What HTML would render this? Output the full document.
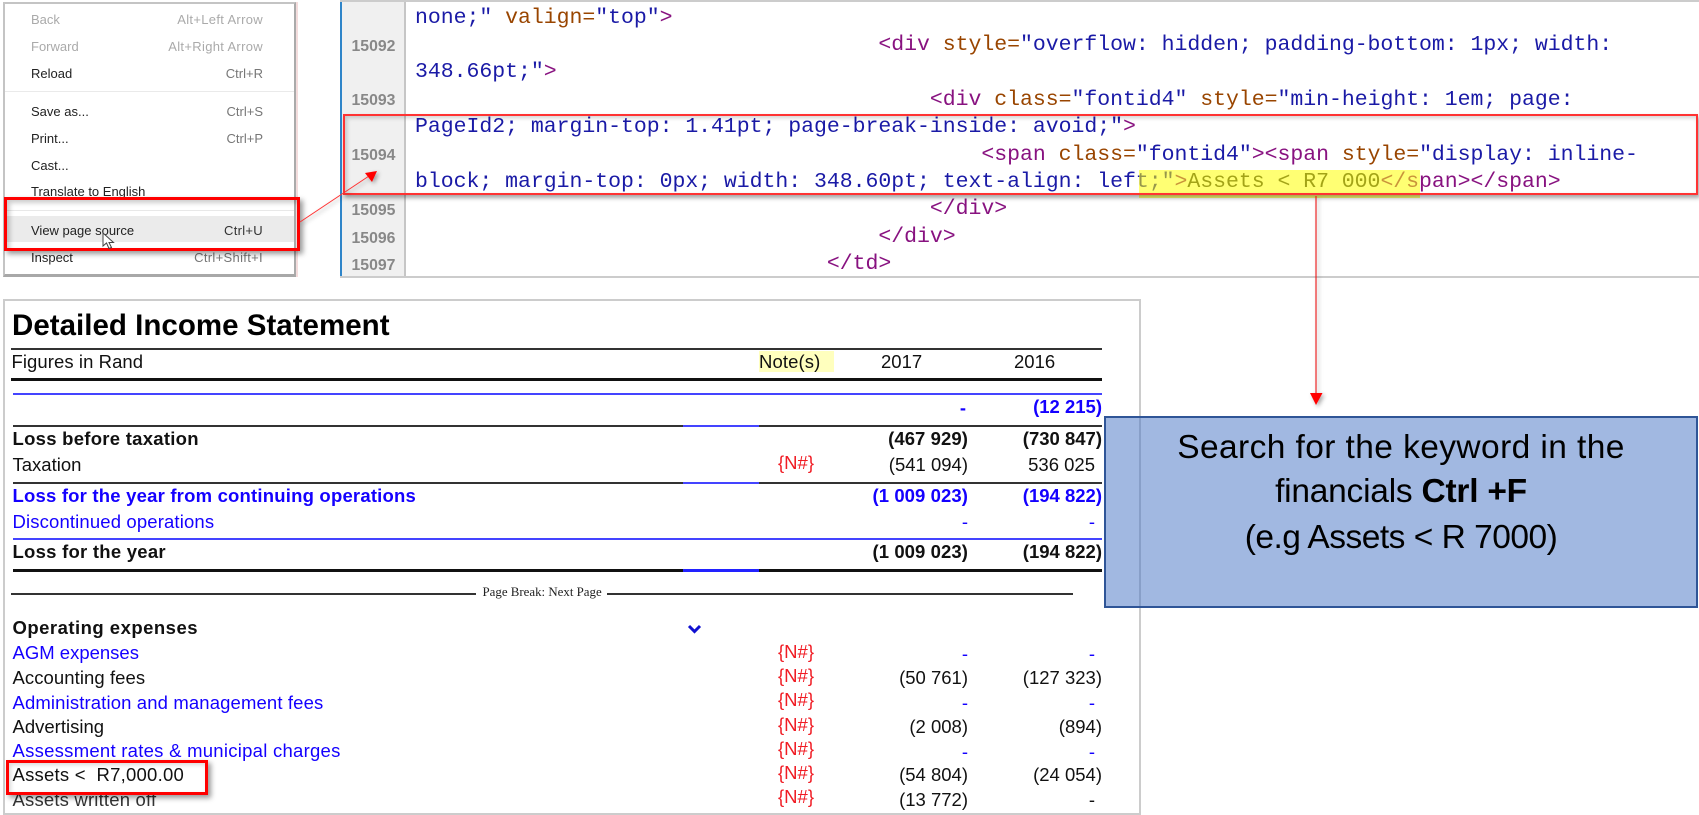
<!DOCTYPE html>
<html><head><meta charset="utf-8"><title>View page source</title>
<style>
html,body{margin:0;padding:0;background:#fff;}
#p{position:relative;width:1699px;height:815px;overflow:hidden;background:#fff;filter:blur(.3px);}
#p div,#p span.a{position:absolute;}
.m{font:13px/20px "Liberation Sans",sans-serif;color:#222;left:31px;white-space:nowrap;}
.k{font:13px/20px "Liberation Sans",sans-serif;color:#777;right:1436px;white-space:nowrap;}
.g{color:#aaa;}
.n{font:bold 15.8px/20px "Liberation Sans",sans-serif;color:#888;left:351.5px;}
pre{position:absolute;left:415px;top:4.5px;margin:0;font:21.5px/27.4px "Liberation Mono",monospace;letter-spacing:-.03px;color:#1a1aa6;white-space:pre;}
.t{color:#881280}.o{color:#994500}
.r{position:absolute;font:18.5px/24px "Liberation Sans",sans-serif;color:#111;white-space:pre;}
.l{left:12.5px}
.b{font-weight:bold}
.u{color:#1400ff}
.c1{right:731px}.c2{right:597px}.c3{right:604px}
.q{left:778px;color:#f01c24;}
.h{position:absolute;}
</style></head><body><div id="p">

<!-- menu -->
<div style="left:3px;top:2px;width:293px;height:275px;background:#fff;border:2px solid #c4c4c4;border-right:2px solid #aaa;border-bottom:3px solid #a8a8a8;box-sizing:border-box"></div>
<div style="left:296px;top:2px;width:2px;height:275px;background:#f3dcdc"></div>
<div style="left:5px;top:91px;width:289px;height:1px;background:#eaeaea"></div>
<div style="left:5px;top:210px;width:289px;height:1px;background:#e8e8e8"></div>
<div style="left:5px;top:216px;width:289px;height:26px;background:#ebebeb"></div>
<div class="m g" style="top:10px">Back</div><div class="k g" style="top:10px;letter-spacing:.32px">Alt+Left Arrow</div>
<div class="m g" style="top:37px">Forward</div><div class="k g" style="top:37px;letter-spacing:.32px">Alt+Right Arrow</div>
<div class="m" style="top:63.5px">Reload</div><div class="k" style="top:63.5px">Ctrl+R</div>
<div class="m" style="top:101.5px">Save as...</div><div class="k" style="top:101.5px">Ctrl+S</div>
<div class="m" style="top:128.5px">Print...</div><div class="k" style="top:128.5px">Ctrl+P</div>
<div class="m" style="top:155.5px">Cast...</div>
<div class="m" style="top:181.5px">Translate to English</div>
<div class="m" style="top:220.5px">View page source</div><div class="k" style="top:220.5px;color:#333;letter-spacing:.3px">Ctrl+U</div>
<div class="m" style="top:247.5px">Inspect</div><div class="k" style="top:247.5px;letter-spacing:.32px">Ctrl+Shift+I</div>
<div style="left:4px;top:197px;width:296px;height:54px;box-sizing:border-box;border:3px solid #f00;box-shadow:3px 3px 5px rgba(0,0,0,.4),inset 3px 3px 5px rgba(0,0,0,.2)"></div>
<svg style="position:absolute;left:102px;top:232px" width="14" height="18" viewBox="0 0 14 18"><path d="M1 1V14L4.5 11L7 16.5L9.5 15.5L7 10.5H11.5Z" fill="#fff" stroke="#444" stroke-width="1"/></svg>

<!-- source panel -->
<div style="left:340px;top:0;width:1359px;height:278px;border-top:2px solid #ccc;border-bottom:2px solid #ccc;box-sizing:border-box;background:#fff"></div>
<div style="left:340px;top:2px;width:2px;height:274px;background:#2f85c9"></div>
<div style="left:342px;top:2px;width:62px;height:274px;background:#f0f0f0;border-right:2px solid #c6c6c6;box-sizing:content-box"></div>
<div class="n" style="top:37px">15092</div>
<div class="n" style="top:91px">15093</div>
<div class="n" style="top:146px">15094</div>
<div class="n" style="top:201px">15095</div>
<div class="n" style="top:229px">15096</div>
<div class="n" style="top:256px">15097</div>
<pre>none;" <span class="o">valign=</span>"top"<span class="t">&gt;</span>
                                    <span class="t">&lt;div</span> <span class="o">style=</span>"overflow: hidden; padding-bottom: 1px; width:
348.66pt;"<span class="t">&gt;</span>
                                        <span class="t">&lt;div</span> <span class="o">class=</span>"fontid4" <span class="o">style=</span>"min-height: 1em; page:
PageId2; margin-top: 1.41pt; page-break-inside: avoid;"<span class="t">&gt;</span>
                                            <span class="t">&lt;span</span> <span class="o">class=</span>"fontid4"<span class="t">&gt;&lt;span</span> <span class="o">style=</span>"display: inline-
block; margin-top: 0px; width: 348.60pt; text-align: left;"<span class="t">&gt;</span><span style="color:#333">Assets &lt; R7 000</span><span class="t">&lt;/span&gt;&lt;/span&gt;</span>
                                        <span class="t">&lt;/div&gt;</span>
                                    <span class="t">&lt;/div&gt;</span>
                                <span class="t">&lt;/td&gt;</span></pre>
<div style="left:1139px;top:170px;width:281px;height:28px;background:rgba(255,255,0,.55)"></div>
<div style="left:343px;top:114px;width:1355px;height:81px;box-sizing:border-box;border:2.5px solid #f33;box-shadow:2px 3px 4px rgba(0,0,0,.35),inset 2px 2px 4px rgba(0,0,0,.18)"></div>

<!-- financial panel -->
<div style="left:3px;top:299px;width:1138px;height:516px;box-sizing:border-box;border:2px solid #ccc;background:#fff"></div>
<div class="r b" style="left:12px;top:309px;font-size:29.5px;line-height:34px;color:#000;letter-spacing:.02px">Detailed Income Statement</div>

<div style="left:11px;top:348px;width:1091px;height:2px;background:#333"></div>
<div style="left:11px;top:378px;width:1091px;height:2.5px;background:#111"></div>
<div style="left:12.5px;top:393px;width:1089.5px;height:2px;background:#4444ff"></div>
<div style="left:12.5px;top:425px;width:1089.5px;height:2px;background:#333"></div>
<div style="left:683px;top:425px;width:76px;height:2px;background:#4444ff"></div>
<div style="left:12.5px;top:481.5px;width:1089.5px;height:2px;background:#333"></div>
<div style="left:683px;top:481.5px;width:76px;height:2px;background:#4444ff"></div>
<div style="left:12.5px;top:538px;width:1089.5px;height:2px;background:#4444ff"></div>
<div style="left:12.5px;top:569px;width:1089.5px;height:2.5px;background:#111"></div>
<div style="left:683px;top:569px;width:76px;height:2.5px;background:#2222ff"></div>
<div style="left:11px;top:593px;width:465px;height:1.5px;background:#333"></div>
<div style="left:607px;top:593px;width:466px;height:1.5px;background:#333"></div>
<div class="r" style="left:482.5px;top:583px;font:12.9px/18px 'Liberation Serif',serif;color:#222">Page Break: Next Page</div>

<div class="h" style="left:759px;top:351px;width:75px;height:21px;background:#ffffbe"></div>
<div class="r l" style="left:11.5px;top:350px;letter-spacing:.07px">Figures in Rand</div>
<div class="r" style="left:759px;top:350px;letter-spacing:.1px">Note(s)</div>
<div class="r" style="left:881px;top:350px">2017</div>
<div class="r" style="left:1014px;top:350px">2016</div>

<div class="r b u c1" style="top:396px;right:733px">-</div>
<div class="r b u c2" style="top:395px">(12 215)</div>

<div class="r l b" style="top:427px;letter-spacing:.27px">Loss before taxation</div>
<div class="r b c1" style="top:427px;letter-spacing:.08px">(467 929)</div>
<div class="r b c2" style="top:427px">(730 847)</div>

<div class="r l" style="top:453px">Taxation</div>
<div class="r q" style="top:451px">{N#}</div>
<div class="r c1" style="top:453px">(541 094)</div>
<div class="r c3" style="top:453px">536 025</div>

<div class="r l b u" style="top:484px;letter-spacing:.2px">Loss for the year from continuing operations</div>
<div class="r b u c1" style="top:484px;letter-spacing:.08px">(1 009 023)</div>
<div class="r b u c2" style="top:484px">(194 822)</div>

<div class="r l u" style="top:509.5px;letter-spacing:.14px">Discontinued operations</div>
<div class="r u c3" style="right:731px;top:510px">-</div>
<div class="r u c3" style="top:510px">-</div>

<div class="r l b" style="top:540px;letter-spacing:.25px">Loss for the year</div>
<div class="r b c1" style="top:540px;letter-spacing:.08px">(1 009 023)</div>
<div class="r b c2" style="top:540px">(194 822)</div>

<div class="r l b" style="top:616px;letter-spacing:.48px">Operating expenses</div>
<svg style="position:absolute;left:687px;top:624px" width="15" height="10" viewBox="0 0 15 10"><path d="M2 2L7.5 7.5L13 2" fill="none" stroke="#1010d0" stroke-width="3"/></svg>

<div class="r l u" style="top:641px">AGM expenses</div>
<div class="r q" style="top:640px">{N#}</div>
<div class="r u c1" style="top:642px">-</div><div class="r u c3" style="top:642px">-</div>

<div class="r l" style="top:666px;letter-spacing:.07px">Accounting fees</div>
<div class="r q" style="top:664px">{N#}</div>
<div class="r c1" style="top:666px">(50 761)</div><div class="r c2" style="top:666px">(127 323)</div>

<div class="r l u" style="top:691px;letter-spacing:.13px">Administration and management fees</div>
<div class="r q" style="top:688px">{N#}</div>
<div class="r u c1" style="top:691px">-</div><div class="r u c3" style="top:691px">-</div>

<div class="r l" style="top:715px">Advertising</div>
<div class="r q" style="top:713px">{N#}</div>
<div class="r c1" style="top:715px">(2 008)</div><div class="r c2" style="top:715px">(894)</div>

<div class="r l u" style="top:739px;letter-spacing:.26px">Assessment rates &amp; municipal charges</div>
<div class="r q" style="top:737px">{N#}</div>
<div class="r u c1" style="top:740px">-</div><div class="r u c3" style="top:740px">-</div>

<div class="r l" style="top:763px;letter-spacing:.23px">Assets &lt;  R7,000.00</div>
<div class="r q" style="top:761px">{N#}</div>
<div class="r c1" style="top:763px">(54 804)</div><div class="r c2" style="top:763px">(24 054)</div>

<div class="r l" style="top:788px;color:#333;letter-spacing:.18px">Assets written off</div>
<div class="r q" style="top:785px">{N#}</div>
<div class="r c1" style="top:788px">(13 772)</div><div class="r c3" style="top:788px">-</div>

<div style="left:6px;top:760px;width:202px;height:35px;box-sizing:border-box;border:3.5px solid #f00;box-shadow:3px 3px 5px rgba(0,0,0,.4),inset 2px 2px 4px rgba(0,0,0,.15)"></div>

<!-- callout -->
<div style="left:1104px;top:416px;width:594px;height:192px;box-sizing:border-box;border:2px solid #2f5597;background:rgba(68,114,196,.5)"></div>
<div class="r" style="left:1104px;top:425px;width:594px;text-align:center;font:33.5px/46px 'Liberation Sans',sans-serif;color:#000;letter-spacing:.41px">Search for the keyword in the</div>
<div class="r" style="left:1104px;top:469px;width:594px;text-align:center;font:33.5px/46px 'Liberation Sans',sans-serif;color:#000;letter-spacing:-.23px">financials <b>Ctrl +F</b></div>
<div class="r" style="left:1104px;top:515px;width:594px;text-align:center;font:33.5px/46px 'Liberation Sans',sans-serif;color:#000;letter-spacing:-.5px">(e.g Assets &lt; R 7000)</div>

<!-- arrows -->
<svg style="position:absolute;left:0;top:0;pointer-events:none" width="1699" height="815" viewBox="0 0 1699 815">
<defs><filter id="s" x="-50%" y="-50%" width="200%" height="200%"><feDropShadow dx="2" dy="2" stdDeviation="2" flood-color="#000" flood-opacity=".35"/></filter></defs>
<g filter="url(#s)">
<path d="M300 222L369 176" stroke="#f33" stroke-width="1" fill="none"/>
<path d="M377 171L365 173L372 182Z" fill="#f00"/>
<path d="M1316 196V394" stroke="#e00" stroke-width="1" fill="none"/>
<path d="M1310 393H1322.5L1316 405Z" fill="#f00"/>
</g>
</svg>
</div></body></html>
